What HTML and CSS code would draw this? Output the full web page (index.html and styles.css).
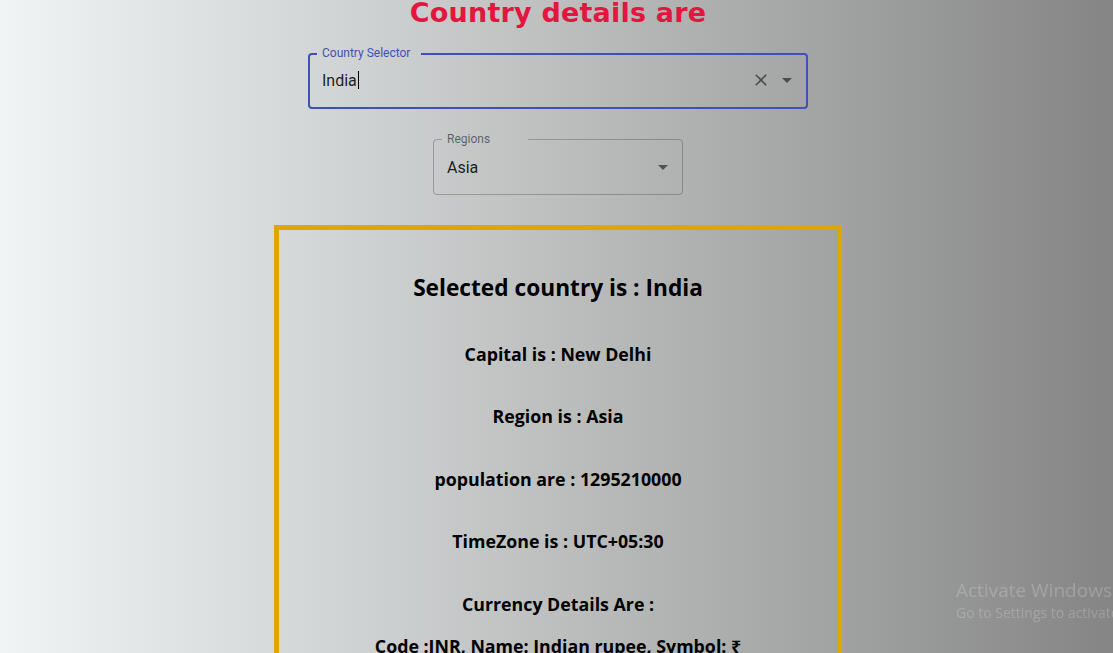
FILE: index.html
```html
<!DOCTYPE html>
<html lang="en">
<head>
<meta charset="utf-8">
<title>Country details</title>
<link rel="stylesheet" href="styles.css">
</head>
<body>
<div class="page">
  <h1 class="title">Country details are</h1>

  <div class="field field-country">
    <fieldset class="outline outline-focused"><legend class="notch notch-country"><span>Country Selector</span></legend></fieldset>
    <label class="field-label label-focused">Country Selector</label>
    <div class="field-input">
      <span class="value">India</span><span class="caret"></span>
    </div>
    <div class="adornments">
      <svg class="icon icon-clear" viewBox="0 0 24 24"><path d="M19 6.41L17.59 5 12 10.59 6.41 5 5 6.41 10.59 12 5 17.59 6.41 19 12 13.41 17.59 19 19 17.59 13.41 12z"/></svg>
      <svg class="icon icon-arrow" viewBox="0 0 24 24"><path d="M7 10l5 5 5-5z"/></svg>
    </div>
  </div>

  <div class="field field-region">
    <fieldset class="outline"><legend class="notch notch-region"><span>Regions</span></legend></fieldset>
    <label class="field-label">Regions</label>
    <div class="field-input"><span class="value">Asia</span></div>
    <div class="adornments">
      <svg class="icon icon-arrow" viewBox="0 0 24 24"><path d="M7 10l5 5 5-5z"/></svg>
    </div>
  </div>

  <section class="details">
    <h2 class="details-head">Selected country is : India</h2>
    <h3 class="line">Capital is : New Delhi</h3>
    <h3 class="line">Region is : Asia</h3>
    <h3 class="line">population are : 1295210000</h3>
    <h3 class="line">TimeZone is : UTC+05:30</h3>
    <h3 class="line">Currency Details Are :</h3>
    <h3 class="line line-code">Code :INR, Name: Indian rupee, Symbol: ₹</h3>
  </section>
</div>

<div class="watermark">
  <div class="wm-title">Activate Windows</div>
  <div class="wm-sub">Go to Settings to activate Windows.</div>
</div>
</body>
</html>
```

FILE: styles.css
```css
html, body {
  margin: 0;
  padding: 0;
}

body {
  min-height: 100vh;
  background: linear-gradient(to right, #f0f4f5 0%, #bdbfbf 50%, #858585 100%);
  font-family: "Open Sans", "Noto Sans", sans-serif;
  color: #000;
  overflow: hidden;
}

.page {
  display: flex;
  flex-direction: column;
  align-items: center;
  padding-left: 3px;
}

.title {
  margin: -6px 0 0 0;
  height: 47px;
  font-family: "Comic Sans MS", "DejaVu Sans", sans-serif;
  font-size: 27px;
  line-height: 38px;
  font-weight: bold;
  color: #e3163f;
  letter-spacing: 0.2px;
}

/* outlined fields */
.field {
  position: relative;
  height: 56px;
  font-family: Roboto, "Liberation Sans", sans-serif;
}

.field-country {
  width: 500px;
  margin-top: 12px;
}

.field-region {
  width: 250px;
  margin-top: 30px;
}

.outline {
  position: absolute;
  inset: -5px 0 0 0;
  margin: 0;
  padding: 0 8px;
  border: 1px solid rgba(0, 0, 0, 0.23);
  border-radius: 4px;
  pointer-events: none;
}

.outline-focused {
  border: 2px solid #3f51b5;
  padding: 0 7px;
}

.notch {
  height: 11px;
  padding: 0;
  font-size: 12px;
  line-height: 11px;
  visibility: hidden;
}

.notch span {
  display: inline-block;
  padding: 0 5px;
}

.notch-country { width: 104px; }
.notch-region { width: 86px; }

.field-label {
  position: absolute;
  top: -7px;
  left: 14px;
  font-size: 12px;
  line-height: 14px;
  color: rgba(0, 0, 0, 0.54);
}

.label-focused {
  color: #3f51b5;
}

.field-input {
  position: absolute;
  left: 14px;
  top: 0;
  height: 56px;
  display: flex;
  align-items: center;
  font-size: 16px;
  color: rgba(0, 0, 0, 0.87);
}

.field-country .field-input {
  height: 54px;
}

.caret {
  display: inline-block;
  width: 1px;
  height: 18px;
  background: #000;
  margin-left: 1px;
}

.adornments {
  position: absolute;
  right: 9px;
  top: 0;
  height: 56px;
  display: flex;
  align-items: center;
  gap: 4px;
}

.field-country .adornments {
  height: 54px;
  right: 9px;
}

.field-region .adornments {
  right: 8px;
}

.icon {
  fill: rgba(0, 0, 0, 0.54);
}

.icon-clear {
  width: 20px;
  height: 20px;
}

.icon-arrow {
  width: 24px;
  height: 24px;
}

/* details box */
.details {
  width: 568px;
  box-sizing: border-box;
  margin-top: 30px;
  border: 5px solid #e2a500;
  padding-top: 42px;
  text-align: center;
}

.details-head {
  margin: 0;
  font-size: 22.7px;
  line-height: 32px;
  font-weight: 700;
}

.line {
  margin: 37.5px 0 0 0;
  font-size: 17.8px;
  line-height: 25px;
  font-weight: 700;
}

.line-code {
  margin-top: 17px;
}

/* OS watermark overlay */
.watermark {
  position: fixed;
  left: 956px;
  top: 578px;
  white-space: nowrap;
  font-family: "Open Sans", "Noto Sans", sans-serif;
  color: rgba(255, 255, 255, 0.2);
}

.wm-title {
  font-size: 19px;
  line-height: 25px;
}

.wm-sub {
  font-size: 14px;
  line-height: 19px;
}
```
